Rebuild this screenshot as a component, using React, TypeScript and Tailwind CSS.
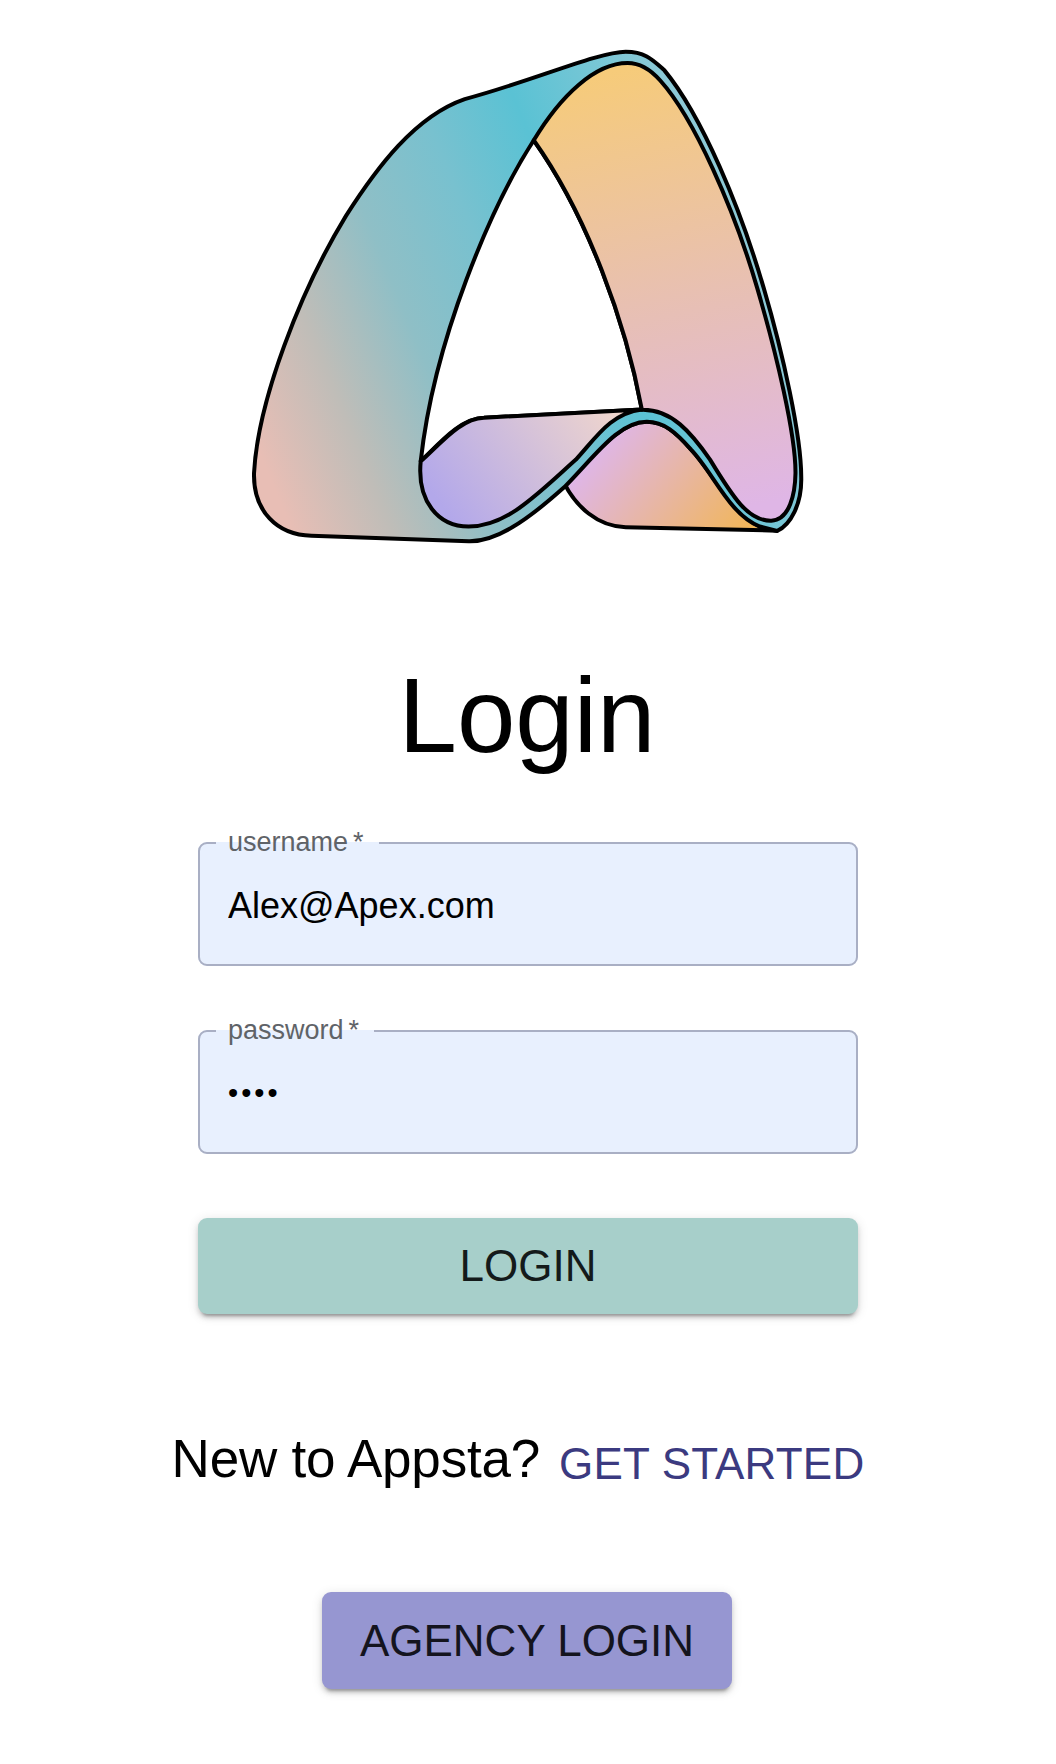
const sans = "font-['Liberation_Sans',Arial,sans-serif]";

function Logo() {
  const line = {
    stroke: "#000",
    strokeWidth: 4,
    strokeLinejoin: "round" as const,
    vectorEffect: "non-scaling-stroke" as const,
  };

  return (
    <svg
      viewBox="60 60 1430 1430"
      preserveAspectRatio="none"
      className="block h-[491px] w-[548px] overflow-visible"
    >
      <defs>
        <linearGradient id="band" gradientUnits="userSpaceOnUse" x1="100" y1="1300" x2="1395" y2="824">
          <stop offset="0" stopColor="#E8BEB5" />
          <stop offset="0.18" stopColor="#BFBDB8" />
          <stop offset="0.36" stopColor="#8FBFC6" />
          <stop offset="0.54" stopColor="#78C1CF" />
          <stop offset="0.71" stopColor="#5AC2D4" />
          <stop offset="1" stopColor="#8CC9D6" />
        </linearGradient>
        <linearGradient id="right" gradientUnits="userSpaceOnUse" x1="1000" y1="120" x2="1300" y2="1400">
          <stop offset="0" stopColor="#F6CB7A" />
          <stop offset="0.55" stopColor="#E7BFB6" />
          <stop offset="1" stopColor="#DFB6E6" />
        </linearGradient>
        <linearGradient id="fold" gradientUnits="userSpaceOnUse" x1="560" y1="1400" x2="1010" y2="1100">
          <stop offset="0" stopColor="#B3A8EA" />
          <stop offset="1" stopColor="#F0D6CC" />
        </linearGradient>
        <linearGradient id="foot" gradientUnits="userSpaceOnUse" x1="960" y1="1220" x2="1330" y2="1480">
          <stop offset="0" stopColor="#DFB6E6" />
          <stop offset="1" stopColor="#F1B65A" />
        </linearGradient>
      </defs>

      {/* lower piece behind the wave */}
      <path
        {...line}
        fill="url(#foot)"
        d="M870 1320 C900 1385 955 1445 1030 1447 L1425 1457 L1380 1445 C1300 1400 1260 1290 1200 1220 C1160 1170 1130 1140 1085 1140 C1020 1140 960 1220 870 1320 Z"
      />
      {/* teal ribbon */}
      <path
        {...line}
        fill="url(#band)"
        d="M1030 62 C960 62 780 150 610 200 C480 250 380 400 300 540 C180 760 70 1080 60 1290 C58 1400 120 1470 210 1472 L620 1488 C690 1490 770 1430 870 1330 C950 1240 1010 1140 1085 1140 C1130 1140 1160 1170 1200 1220 C1260 1290 1300 1410 1380 1445 L1425 1458 C1460 1440 1490 1380 1488 1300 C1488 1180 1440 940 1390 750 C1330 520 1230 250 1130 115 C1100 85 1080 62 1030 62 Z"
      />
      {/* opening of the letter */}
      <path
        {...line}
        fill="#fff"
        d="M790 320 C930 540 1030 850 1072 1104 L660 1128 C600 1130 550 1195 495 1255 C530 900 680 510 790 320 Z"
      />
      {/* right inner face */}
      <path
        {...line}
        fill="url(#right)"
        d="M790 320 C860 190 950 95 1035 95 C1062 95 1090 108 1120 146 C1208 255 1313 520 1373 750 C1423 940 1474 1180 1473 1290 C1472 1350 1458 1425 1410 1428 C1350 1430 1310 1360 1250 1250 C1200 1170 1150 1105 1075 1105 L1072 1104 C1030 850 930 540 790 320 Z"
      />
      {/* fold on the left */}
      <path
        {...line}
        fill="url(#fold)"
        d="M495 1255 C550 1200 600 1130 660 1128 L1072 1104 C990 1115 950 1190 900 1250 C800 1350 720 1445 620 1445 C540 1445 485 1370 495 1255 Z"
      />
    </svg>
  );
}

function Field({ label, type, value }: { label: string; type: string; value: string }) {
  const isPassword = type === "password";

  return (
    <fieldset className="w-[660px] rounded-[9px] border-2 border-[#A9AFC4] bg-[#E8F0FE]">
      <legend className="ml-[16px] px-[12px] pr-[15px] text-[27px] leading-[27px] text-[#5F6368]">
        {label}
        <span className="ml-[5px]">*</span>
      </legend>
      <input
        readOnly
        type={type}
        value={value}
        className={`block h-[108px] w-full bg-transparent pl-[28px] leading-[42px] text-black outline-none ${sans} ${
          isPassword ? "pb-[10px] text-[29px] tracking-[3px]" : "pb-[9px] text-[36px]"
        }`}
      />
    </fieldset>
  );
}

export default function App() {
  return (
    <div className={`flex min-h-[1764px] flex-col items-center bg-white pt-[51px] ${sans}`}>
      <Logo />

      <h1 className="mt-[114px] pr-[2px] text-[105px] leading-[120px] font-normal text-black">Login</h1>

      <form className="mt-[53px] flex flex-col items-center">
        <div className="flex flex-col gap-[51px]">
          <Field label="username" type="text" value="Alex@Apex.com" />
          <Field label="password" type="password" value="1234" />
        </div>

        <button
          type="button"
          className="mt-[64px] h-[96px] w-[660px] rounded-[9px] bg-[#A7CFCA] text-[44px] text-[#141A1A] shadow-[0_6px_3px_-4px_rgba(0,0,0,0.25),0_4px_5px_0_rgba(0,0,0,0.14),0_2px_12px_0_rgba(0,0,0,0.12)]"
        >
          LOGIN
        </button>
      </form>

      <div className="mt-[110px] flex items-center gap-[19px] pr-[20px]">
        <span className="text-[53px] leading-[60px] tracking-[-0.2px] text-black">New to Appsta?</span>
        <a className="mt-[10px] text-[44px] leading-[60px] tracking-[0.2px] text-[#3B3A80]">GET STARTED</a>
      </div>

      <button
        type="button"
        className="mt-[98px] mr-[2px] h-[97px] w-[410px] rounded-[9px] bg-[#9696D1] text-[44px] text-[#14141E] shadow-[0_6px_3px_-4px_rgba(0,0,0,0.25),0_4px_5px_0_rgba(0,0,0,0.14),0_2px_12px_0_rgba(0,0,0,0.12)]"
      >
        AGENCY LOGIN
      </button>
    </div>
  );
}
